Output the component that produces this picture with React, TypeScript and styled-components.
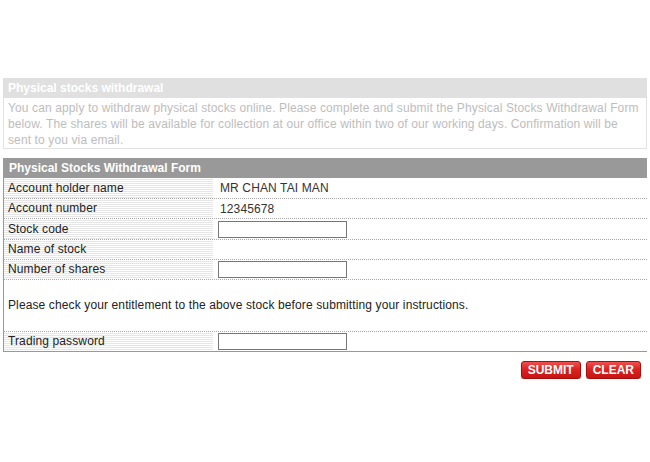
import React from 'react';
import styled, { createGlobalStyle } from 'styled-components';

const GlobalStyle = createGlobalStyle`
  body {
    margin: 0;
    background: #fff;
    font-family: "Liberation Sans", Arial, sans-serif;
    font-size: 12px;
    letter-spacing: 0.12px;
  }
`;

const Page = styled.div`
  padding: 78px 3px 0 3px;
  width: 644px;
`;

const SectionTitle = styled.div<{ $bg: string }>`
  background: ${(p) => p.$bg};
  color: #fff;
  font-weight: bold;
  font-size: 12px;
  letter-spacing: 0;
  height: 20px;
  line-height: 20px;
  padding-left: 5px;
`;

const Intro = styled.div`
  border: 1px solid #e2e2e2;
  border-top: none;
  color: #bdbdbd;
  line-height: 16px;
  padding: 2px 4px 0 4px;
`;

const FormBox = styled.div`
  margin-top: 9px;
  border-left: 1px solid #999;
  border-bottom: 1px solid #999;
`;

const Row = styled.div`
  display: grid;
  grid-template-columns: 209px 1fr;
  border-bottom: 1px dotted #aaa;
`;

const Label = styled.div<{ $h?: number }>`
  height: ${(p) => p.$h ?? 19}px;
  line-height: ${(p) => p.$h ?? 19}px;
  padding-left: 4px;
  color: #222;
  background: repeating-linear-gradient(
    to bottom,
    #fff 0px,
    #fff 1px,
    #e6e6e6 1px,
    #e6e6e6 2px
  );
`;

const Value = styled.div`
  display: flex;
  align-items: center;
  padding-left: 7px;
  color: #333;
`;

const TextInput = styled.input`
  box-sizing: border-box;
  width: 129px;
  height: 17px;
  margin-left: -2px;
  border: 1px solid #777;
  padding: 0 2px;
  font-family: inherit;
  font-size: 12px;
`;

const Notice = styled.div`
  height: 51px;
  line-height: 51px;
  padding-left: 4px;
  color: #222;
  border-bottom: 1px dotted #aaa;
`;

const LastRow = styled(Row)`
  border-bottom: none;
`;

const Actions = styled.div`
  display: flex;
  justify-content: flex-end;
  gap: 5px;
  padding: 9px 6px 0 0;
`;

const RedButton = styled.button`
  height: 18px;
  padding: 0 6px;
  border: 1px solid #a31010;
  border-radius: 3px;
  background: linear-gradient(to bottom, #f05050 0%, #dd2222 45%, #c81414 100%);
  box-shadow: 0 1px 1px rgba(0, 0, 0, 0.35);
  color: #fff;
  font-family: "Liberation Sans", Arial, sans-serif;
  font-weight: bold;
  font-size: 12px;
  line-height: 16px;
`;

export default function App() {
  return (
    <Page>
      <GlobalStyle />
      <SectionTitle $bg="#e0e0e0">Physical stocks withdrawal</SectionTitle>
      <Intro>
        You can apply to withdraw physical stocks online. Please complete and submit the Physical
        Stocks Withdrawal Form below. The shares will be available for collection at our office
        within two of our working days. Confirmation will be sent to you via email.
      </Intro>
      <FormBox>
        <SectionTitle $bg="#999">Physical Stocks Withdrawal Form</SectionTitle>
        <Row>
          <Label $h={20}>Account holder name</Label>
          <Value>MR CHAN TAI MAN</Value>
        </Row>
        <Row>
          <Label>Account number</Label>
          <Value>12345678</Value>
        </Row>
        <Row>
          <Label $h={20}>Stock code</Label>
          <Value>
            <TextInput type="text" />
          </Value>
        </Row>
        <Row>
          <Label>Name of stock</Label>
          <Value />
        </Row>
        <Row>
          <Label>Number of shares</Label>
          <Value>
            <TextInput type="text" />
          </Value>
        </Row>
        <Notice>Please check your entitlement to the above stock before submitting your instructions.</Notice>
        <LastRow>
          <Label>Trading password</Label>
          <Value>
            <TextInput type="password" />
          </Value>
        </LastRow>
      </FormBox>
      <Actions>
        <RedButton>SUBMIT</RedButton>
        <RedButton>CLEAR</RedButton>
      </Actions>
    </Page>
  );
}
